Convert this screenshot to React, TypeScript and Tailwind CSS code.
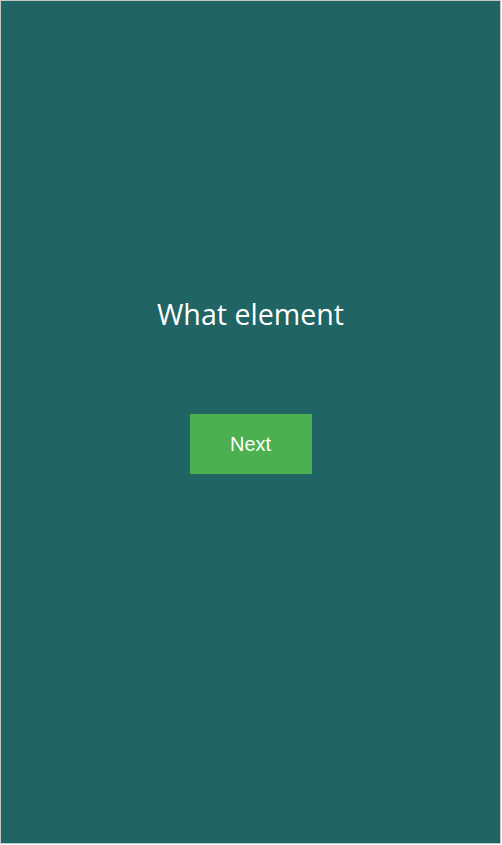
export default function App() {
  return (
    <div className="w-[502px] h-[845px] bg-white">
      <div className="w-[501px] h-[844px] border border-[#c8c8c8] bg-[#206463] flex flex-col items-center">
        <h1 className="mt-[294px] text-[28.6px] leading-[38px] text-white font-['Open_Sans',sans-serif] font-normal">What element</h1>
        <button className="mt-[81px] w-[122px] h-[60px] bg-[#4caf50] text-white text-[20px] font-['Liberation_Sans',Arial,sans-serif]">Next</button>
      </div>
    </div>
  );
}
